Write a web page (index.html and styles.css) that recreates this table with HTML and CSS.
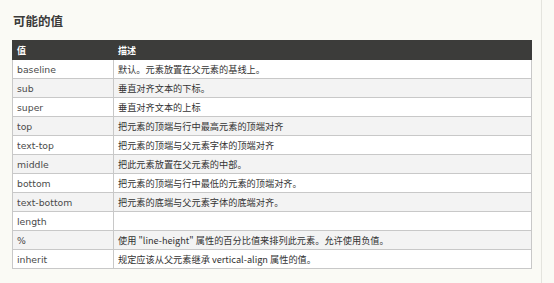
FILE: index.html
```html
<!DOCTYPE html>
<html lang="zh">
<head>
<meta charset="utf-8">
<link rel="stylesheet" href="styles.css">
</head>
<body>
<div class="page">
  <div class="content">
    <h2 class="title">可能的值</h2>
    <table class="values">
      <thead>
        <tr><th class="c1">值</th><th>描述</th></tr>
      </thead>
      <tbody>
        <tr><td>baseline</td><td>默认。元素放置在父元素的基线上。</td></tr>
        <tr><td>sub</td><td>垂直对齐文本的下标。</td></tr>
        <tr><td>super</td><td>垂直对齐文本的上标</td></tr>
        <tr><td>top</td><td>把元素的顶端与行中最高元素的顶端对齐</td></tr>
        <tr><td>text-top</td><td>把元素的顶端与父元素字体的顶端对齐</td></tr>
        <tr><td>middle</td><td>把此元素放置在父元素的中部。</td></tr>
        <tr><td>bottom</td><td>把元素的顶端与行中最低的元素的顶端对齐。</td></tr>
        <tr><td>text-bottom</td><td>把元素的底端与父元素字体的底端对齐。</td></tr>
        <tr><td>length</td><td></td></tr>
        <tr><td>%</td><td>使用 "line-height" 属性的百分比值来排列此元素。允许使用负值。</td></tr>
        <tr><td>inherit</td><td>规定应该从父元素继承 vertical-align 属性的值。</td></tr>
      </tbody>
    </table>
  </div>
  <div class="side"></div>
</div>
</body>
</html>
```

FILE: styles.css
```css
html, body {
  margin: 0;
  padding: 0;
  background: #fafaf5;
}
body {
  font-family: "Liberation Sans", "Noto Sans CJK SC", sans-serif;
  color: #333;
}
.page {
  display: flex;
  height: 283px;
}
.content {
  width: 542px;
  padding: 12px 0 0 12px;
  box-sizing: border-box;
  border-right: 1px solid #e4e4de;
}
.side {
  flex: 1;
}
.title {
  margin: 0 0 10px 1px;
  font-size: 12.5px;
  line-height: 18px;
  font-weight: bold;
  color: #3a3a3a;
  font-family: "Noto Sans CJK SC", sans-serif;
}
.values {
  border-collapse: collapse;
  width: 520px;
  font-size: 10px;
  table-layout: fixed;
}
.values th {
  background: #3c3c3a;
  color: #fff;
  text-align: left;
  font-weight: bold;
  font-size: 9px;
  height: 18px;
  padding: 0 4px;
  border: 1px solid #3c3c3a;
  font-family: "Noto Sans CJK SC", sans-serif;
}
.values th.c1 {
  width: 92px;
}
.values td {
  height: 18px;
  padding: 0 4px;
  border: 1px solid #c8c8c8;
  background: #fff;
  font-family: "DejaVu Sans", "Noto Sans CJK SC", sans-serif;
  font-size: 9.3px;
  color: #4a4a4a;
  white-space: nowrap;
  overflow: hidden;
}
.values td + td {
  font-family: "Noto Sans CJK SC", sans-serif;
  font-size: 9.2px;
  color: #333;
}
.values tbody tr:nth-child(even) td {
  background: #f3f3f3;
}
```
